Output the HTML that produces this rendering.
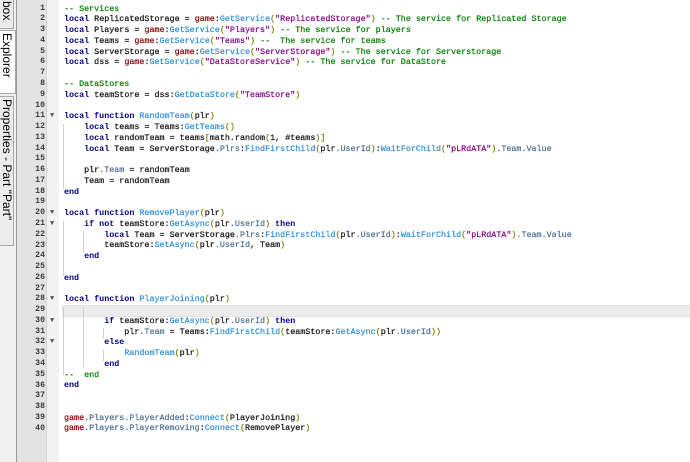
<!DOCTYPE html>
<html><head><meta charset="utf-8"><style>
body{margin:0;width:690px;height:462px;background:#fff;overflow:hidden;position:relative;font-family:"Liberation Mono",monospace}
#left{position:absolute;left:0;top:0;width:16px;height:462px;background:#f0f0f0;border-right:1px solid #9a9a9a}
.tab{position:absolute;left:0;width:13px;border:1px solid #a8a8a8;border-left:none;background:#ececec;overflow:hidden}
.tab span{position:absolute;left:1px;top:2px;writing-mode:vertical-rl;font-family:"Liberation Sans",sans-serif;font-size:12px;color:#000;line-height:12px;white-space:nowrap}
#nums{position:absolute;left:17px;top:0;width:29px;height:462px;background:#e3e3e3;border-right:1px solid #d6d6d6}
#fold{position:absolute;left:47px;top:0;width:12px;height:462px;background:#f2f2f2}
.n{position:absolute;left:17px;width:28px;text-align:right;font-size:8.2px;font-weight:bold;color:#3a3a3a;height:10.77px;line-height:10.77px}
.ar{position:absolute;left:50px;font-size:7px;color:#555;line-height:10.77px}
#hl{position:absolute;left:62px;top:305px;width:628px;height:10px;background:#ececec;border-top:1px solid #e2e2e2;border-bottom:1px solid #e2e2e2}
.g{position:absolute;width:1px;background:#d0d0d0}
#code{position:absolute;left:64px;top:3.6px;font-size:8.4px;line-height:10.77px;white-space:pre;color:#1a1a1a;font-weight:normal;-webkit-text-stroke:0.25px #1a1a1a}
.k{color:#00007f;font-weight:bold;-webkit-text-stroke:0}.c{color:#008000;-webkit-text-stroke:0.2px #008000}.s{color:#7f007f;-webkit-text-stroke:0.2px #7f007f}.m{color:#2f8fd8;-webkit-text-stroke:0.2px #2f8fd8}.p{color:#7f7f00;-webkit-text-stroke:0.2px #7f7f00}.q{color:#7f0000;-webkit-text-stroke:0.2px #7f0000}.f{color:#4f6f8f;-webkit-text-stroke:0.2px #4f6f8f}.o{color:#333}
</style></head><body>
<div id="left">
<div class="tab" style="top:-2px;height:29px"><span>box</span></div>
<div class="tab" style="top:30px;height:62px;background:#fff;width:15px"><span>Explorer</span></div>
<div class="tab" style="top:96px;height:148px"><span>Properties - Part "Part"</span></div>
</div>
<div id="nums"></div><div id="fold"></div>
<div id="hl"></div>
<div class="g" style="left:63px;top:124px;height:65px"></div>
<div class="g" style="left:63px;top:221px;height:55px"></div>
<div class="g" style="left:83px;top:231px;height:22px"></div>
<div class="g" style="left:63px;top:307px;height:68px"></div>
<div class="g" style="left:83px;top:307px;height:60px"></div>
<div class="g" style="left:103px;top:328px;height:11px"></div>
<div class="g" style="left:103px;top:350px;height:11px"></div>
<div id="numwrap"></div>
<script>
var w=document.getElementById('numwrap'),h='';
for(var i=1;i<=40;i++){h+='<div class="n" style="top:'+(3.6+(i-1)*10.77)+'px">'+i+'</div>';}
[11,20,21,28,30,32].forEach(function(i){h+='<div class="ar" style="top:'+(3.6+(i-1)*10.77)+'px">&#9660;</div>';});
w.innerHTML=h;
</script>
<div id="code"><span class="c">-- Services</span>
<span class="k">local</span> ReplicatedStorage <span class="o">=</span> <span class="q">game</span><span class="o">:</span><span class="m">GetService</span><span class="p">(</span><span class="s">"ReplicatedStorage"</span><span class="p">)</span> <span class="c">-- The service for Replicated Storage</span>
<span class="k">local</span> Players <span class="o">=</span> <span class="q">game</span><span class="o">:</span><span class="m">GetService</span><span class="p">(</span><span class="s">"Players"</span><span class="p">)</span> <span class="c">-- The service for players</span>
<span class="k">local</span> Teams <span class="o">=</span> <span class="q">game</span><span class="o">:</span><span class="m">GetService</span><span class="p">(</span><span class="s">"Teams"</span><span class="p">)</span> <span class="c">--  The service for teams</span>
<span class="k">local</span> ServerStorage <span class="o">=</span> <span class="q">game</span><span class="o">:</span><span class="m">GetService</span><span class="p">(</span><span class="s">"ServerStorage"</span><span class="p">)</span> <span class="c">-- The service for Serverstorage</span>
<span class="k">local</span> dss <span class="o">=</span> <span class="q">game</span><span class="o">:</span><span class="m">GetService</span><span class="p">(</span><span class="s">"DataStoreService"</span><span class="p">)</span> <span class="c">-- The service for DataStore</span>

<span class="c">-- DataStores</span>
<span class="k">local</span> teamStore <span class="o">=</span> dss<span class="o">:</span><span class="m">GetDataStore</span><span class="p">(</span><span class="s">"TeamStore"</span><span class="p">)</span>

<span class="k">local function</span> <span class="m">RandomTeam</span><span class="p">(</span>plr<span class="p">)</span>
    <span class="k">local</span> teams <span class="o">=</span> Teams<span class="o">:</span><span class="m">GetTeams</span><span class="p">()</span>
    <span class="k">local</span> randomTeam <span class="o">=</span> teams<span class="p">[</span>math<span class="o">.</span>random<span class="p">(</span><span class="o">1,</span> <span class="o">#</span>teams<span class="p">)]</span>
    <span class="k">local</span> Team <span class="o">=</span> ServerStorage<span class="f">.Plrs</span><span class="o">:</span><span class="m">FindFirstChild</span><span class="p">(</span>plr<span class="f">.UserId</span><span class="p">)</span><span class="o">:</span><span class="m">WaitForChild</span><span class="p">(</span><span class="s">"pLRdATA"</span><span class="p">)</span><span class="f">.Team.Value</span>

    plr<span class="f">.Team</span> <span class="o">=</span> randomTeam
    Team <span class="o">=</span> randomTeam
<span class="k">end</span>

<span class="k">local function</span> <span class="m">RemovePlayer</span><span class="p">(</span>plr<span class="p">)</span>
    <span class="k">if not</span> teamStore<span class="o">:</span><span class="m">GetAsync</span><span class="p">(</span>plr<span class="f">.UserId</span><span class="p">)</span> <span class="k">then</span>
        <span class="k">local</span> Team <span class="o">=</span> ServerStorage<span class="f">.Plrs</span><span class="o">:</span><span class="m">FindFirstChild</span><span class="p">(</span>plr<span class="f">.UserId</span><span class="p">)</span><span class="o">:</span><span class="m">WaitForChild</span><span class="p">(</span><span class="s">"pLRdATA"</span><span class="p">)</span><span class="f">.Team.Value</span>
        teamStore<span class="o">:</span><span class="m">SetAsync</span><span class="p">(</span>plr<span class="f">.UserId</span><span class="o">,</span> Team<span class="p">)</span>
    <span class="k">end</span>

<span class="k">end</span>

<span class="k">local function</span> <span class="m">PlayerJoining</span><span class="p">(</span>plr<span class="p">)</span>

        <span class="k">if</span> teamStore<span class="o">:</span><span class="m">GetAsync</span><span class="p">(</span>plr<span class="f">.UserId</span><span class="p">)</span> <span class="k">then</span>
            plr<span class="f">.Team</span> <span class="o">=</span> Teams<span class="o">:</span><span class="m">FindFirstChild</span><span class="p">(</span>teamStore<span class="o">:</span><span class="m">GetAsync</span><span class="p">(</span>plr<span class="f">.UserId</span><span class="p">))</span>
        <span class="k">else</span>
            <span class="m">RandomTeam</span><span class="p">(</span>plr<span class="p">)</span>
        <span class="k">end</span>
<span class="c">--  end</span>
<span class="k">end</span>


<span class="q">game</span><span class="f">.Players.PlayerAdded</span><span class="o">:</span><span class="m">Connect</span><span class="p">(</span>PlayerJoining<span class="p">)</span>
<span class="q">game</span><span class="f">.Players.PlayerRemoving</span><span class="o">:</span><span class="m">Connect</span><span class="p">(</span>RemovePlayer<span class="p">)</span></div>
</body></html>
